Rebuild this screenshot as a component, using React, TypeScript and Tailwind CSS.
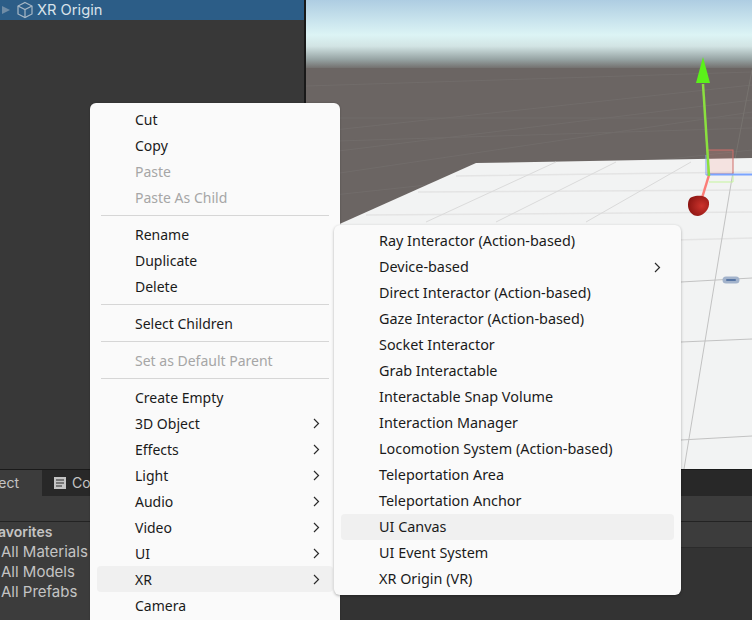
import * as React from 'react';

type Item =
  | { sep: true }
  | { label: string; disabled?: boolean; arrow?: boolean; active?: boolean; sep?: false };

const mainMenu: Item[] = [
  { label: 'Cut' },
  { label: 'Copy' },
  { label: 'Paste', disabled: true },
  { label: 'Paste As Child', disabled: true },
  { sep: true },
  { label: 'Rename' },
  { label: 'Duplicate' },
  { label: 'Delete' },
  { sep: true },
  { label: 'Select Children' },
  { sep: true },
  { label: 'Set as Default Parent', disabled: true },
  { sep: true },
  { label: 'Create Empty' },
  { label: '3D Object', arrow: true },
  { label: 'Effects', arrow: true },
  { label: 'Light', arrow: true },
  { label: 'Audio', arrow: true },
  { label: 'Video', arrow: true },
  { label: 'UI', arrow: true },
  { label: 'XR', arrow: true, active: true },
  { label: 'Camera' },
];

const xrMenu: Item[] = [
  { label: 'Ray Interactor (Action-based)' },
  { label: 'Device-based', arrow: true },
  { label: 'Direct Interactor (Action-based)' },
  { label: 'Gaze Interactor (Action-based)' },
  { label: 'Socket Interactor' },
  { label: 'Grab Interactable' },
  { label: 'Interactable Snap Volume' },
  { label: 'Interaction Manager' },
  { label: 'Locomotion System (Action-based)' },
  { label: 'Teleportation Area' },
  { label: 'Teleportation Anchor' },
  { label: 'UI Canvas', active: true },
  { label: 'UI Event System' },
  { label: 'XR Origin (VR)' },
];

const Chevron = () => (
  <svg width="7" height="11" viewBox="0 0 7 11" fill="none" className="shrink-0">
    <path d="M1 1l4.5 4.5L1 10" stroke="#2b2b2b" strokeWidth="1.2" />
  </svg>
);

const Menu = ({ items }: { items: Item[] }) => (
  <div className="flex flex-col">
    {items.map((item, i) =>
      item.sep ? (
        <div key={i} className="h-[11px] flex items-center px-[11px] pb-px">
          <div className="h-px w-full bg-[#d6d6d6]" />
        </div>
      ) : (
        <div
          key={i}
          className={`h-[26px] mx-[7px] pl-[38px] pr-[13px] rounded flex items-center justify-between ${
            item.active ? 'bg-[#f0f0f0]' : ''
          } ${item.disabled ? 'text-[#a6a6a6]' : 'text-[#1a1a1a]'}`}
        >
          <span className="pt-px">{item.label}</span>
          {item.arrow && <Chevron />}
        </div>
      )
    )}
  </div>
);

const SceneView = () => (
  <svg viewBox="0 0 446 469" className="block w-full h-full">
    <defs>
      <linearGradient id="sky" x1="0" y1="0" x2="0" y2="1">
        <stop offset="0" stopColor="#aecde2" />
        <stop offset="0.5" stopColor="#dcf4f5" />
        <stop offset="0.66" stopColor="#d2e4e4" />
        <stop offset="0.85" stopColor="#96a3a3" />
        <stop offset="1" stopColor="#6b6563" />
      </linearGradient>
      <radialGradient id="ball" cx="0.65" cy="0.5" r="0.65">
        <stop offset="0" stopColor="#cc332c" />
        <stop offset="1" stopColor="#8c1512" />
      </radialGradient>
    </defs>
    <rect width="446" height="70" fill="url(#sky)" />
    <rect y="68" width="446" height="401" fill="#6b6563" />
    <g stroke="#716c6a" strokeWidth="1" fill="none">
      <path d="M0 86L446 72M0 118L446 118M0 133L446 85M0 142L446 128M0 155L446 100M0 178L446 112M0 198L446 150" />
      <path d="M427 170L446 70" stroke="#77736f" />
    </g>
    <polygon points="170,163 446,158 446,469 0,469 0,239" fill="#f2f3f3" />
    <g stroke="#e4e4e4" strokeWidth="1.5" fill="none">
      <path d="M150 176L446 172M112 192L446 190M60 215L446 212M0 250L446 238" />
    </g>
    <g stroke="#dadada" strokeWidth="1" fill="none">
      <path d="M250 162L120 222M310 162L190 222M385 162L280 222" />
    </g>
    <g stroke="#c2c2c2" strokeWidth="1" fill="none">
      <path d="M378 469L414 250L427 172" />
      <path d="M375 282L446 278M375 342L446 339M375 440L446 436" />
    </g>
    <path d="M420 280h10" stroke="#a3b3cb" strokeWidth="7" strokeLinecap="round" />
    <path d="M421 280h8" stroke="#5775a3" strokeWidth="2" strokeLinecap="round" />
    <g fill="none" strokeWidth="1">
      <rect x="402" y="150" width="25" height="24" fill="#ff8478" fillOpacity="0.15" stroke="#cf6f6a" />
      <path d="M400 155v20h3" stroke="#7f9ef5" />
      <path d="M403 182h24v-8" stroke="#c5f59d" />
    </g>
    <path d="M401 174.500L446 174.500" stroke="#7aa4ff" strokeWidth="2" />
    <path d="M403 175L396 198" stroke="#fb7e78" strokeWidth="2.5" />
    <path d="M397 84L403 176" stroke="#8ae03f" strokeWidth="2.5" />
    <polygon points="397,57 390,83 404,83" fill="#5bf01a" />
    <path d="M386 197c6-2 15-2 17 5c1 7-5 13-11 14c-6 0-10-5-10-11c0-4 1-7 4-8z" fill="url(#ball)" />
  </svg>
);

export default function App() {
  return (
    <div className="relative w-[752px] h-[620px] overflow-hidden flex flex-col bg-[#333333] font-['Noto_Sans',sans-serif] text-sm">
      <div className="flex h-[469px] shrink-0 font-['Inter',sans-serif] text-[14.7px]">
        <div className="w-[304px] bg-[#383838]">
          <div className="h-5 bg-[#2c5d87] flex items-center text-[#d8e2ea]">
            <svg width="10" height="10" viewBox="0 0 10 10" className="ml-px">
              <path d="M1 1l8 4l-8 4z" fill="#6f8ca6" />
            </svg>
            <svg width="18" height="18" viewBox="0 0 18 18" fill="none" stroke="#a8b8c6" strokeWidth="1.2" className="ml-[5px]">
              <path d="M9 1.500l7 3.500v8l-7 3.500l-7-3.500V5z" />
              <path d="M2 5l7 3.500L16 5M9 8.500v8" />
            </svg>
            <span className="ml-[3px]">XR Origin</span>
          </div>
        </div>
        <div className="w-[2px] bg-[#191919]" />
        <div className="flex-1 min-w-0">
          <SceneView />
        </div>
      </div>

      <div className="flex-1 border-t border-[#1a1a1a] flex flex-col font-['Inter',sans-serif] text-sm">
        <div className="h-[26px] bg-[#282828] flex text-[#c4c4c4]">
          <div className="w-[42px] bg-[#3c3c3c] flex items-center justify-end pr-[23px]">
            <span>ect</span>
          </div>
          <div className="flex items-center pl-[12px] gap-[6px]">
            <svg width="12" height="12" viewBox="0 0 12 12">
              <rect width="12" height="12" fill="#c4c4c4" />
              <path d="M2 3h8M2 6h8M2 9h6" stroke="#282828" strokeWidth="1" />
            </svg>
            <span>Console</span>
          </div>
        </div>
        <div className="h-[25px] bg-[#3c3c3c] border-b border-[#232323] box-content" />
        <div className="flex-1 flex">
          <div className="w-[304px] bg-[#3c3c3c] text-[#c4c4c4] text-[15px] leading-5">
            <div className="font-semibold text-sm whitespace-nowrap -ml-[10px]">Favorites</div>
            <div className="pl-[1px]">All Materials</div>
            <div className="pl-[1px]">All Models</div>
            <div className="pl-[1px]">All Prefabs</div>
          </div>
          <div className="flex-1 flex flex-col">
            <div className="h-[25px] bg-[#3c3c3c] border-b border-[#2b2b2b] box-content" />
            <div className="flex-1 bg-[#333333]" />
          </div>
        </div>
      </div>

      {/* context menu + xr submenu */}
      <div className="absolute left-[90px] top-[103px] w-[250px] h-[530px] pt-[3px] bg-[#fafafa] rounded-md shadow-[0_0_2px_rgba(0,0,0,0.25)]">
        <Menu items={mainMenu} />
      </div>
      <div className="absolute left-[334px] top-[225px] w-[347px] h-[370px] pt-[3px] bg-[#fafafa] rounded-md text-[14.4px] shadow-[0_1px_3px_rgba(0,0,0,0.3)]">
        <Menu items={xrMenu} />
      </div>
    </div>
  );
}
